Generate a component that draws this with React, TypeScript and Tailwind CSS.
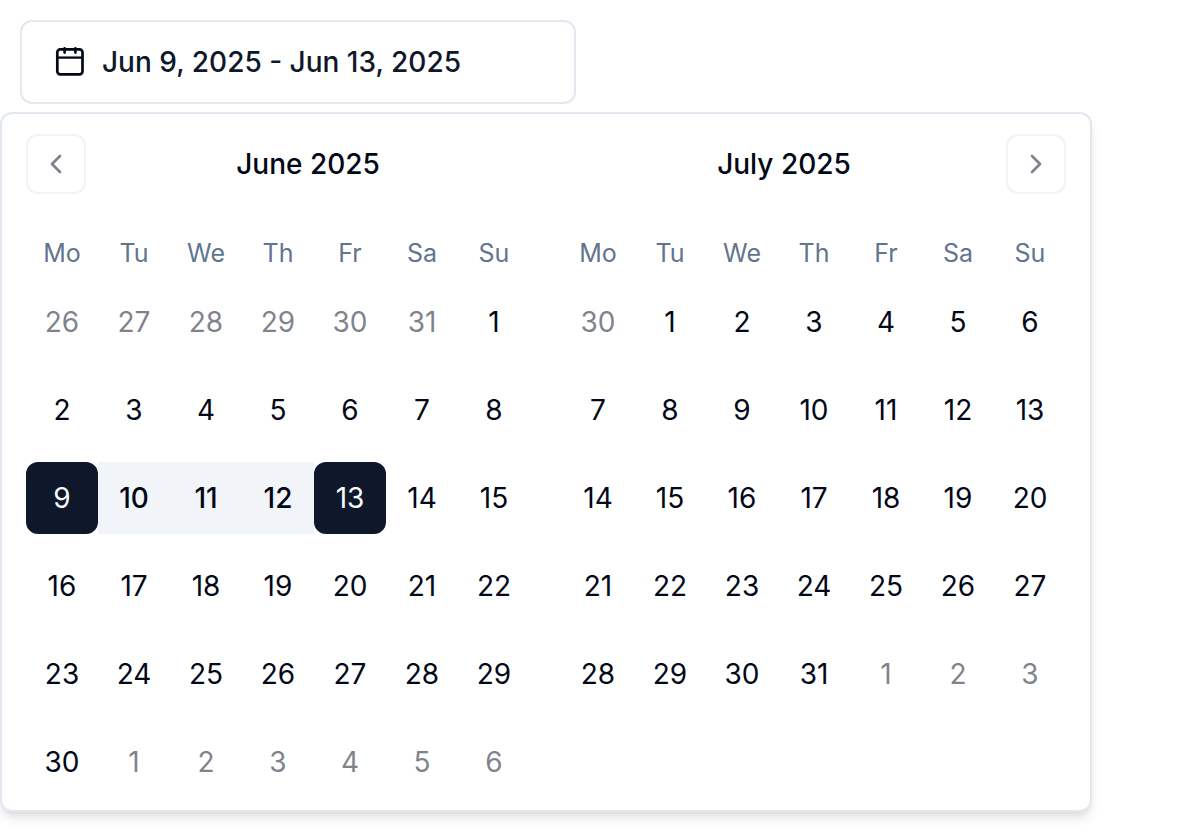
import React from "react";
import { ChevronLeft, ChevronRight } from "lucide-react";

type Day = { n: number; outside: boolean };
type Month = { name: string; lead: number[]; length: number; trail: number };

const WEEKDAYS = [
  ["Mo", "Monday"],
  ["Tu", "Tuesday"],
  ["We", "Wednesday"],
  ["Th", "Thursday"],
  ["Fr", "Friday"],
  ["Sa", "Saturday"],
  ["Su", "Sunday"],
];

const JUNE: Month = { name: "June 2025", lead: [26, 27, 28, 29, 30, 31], length: 30, trail: 6 };
const JULY: Month = { name: "July 2025", lead: [30], length: 31, trail: 3 };

function weeksOf(month: Month): Day[][] {
  const days: Day[] = [
    ...month.lead.map((n) => ({ n, outside: true })),
    ...Array.from({ length: month.length }, (_, i) => ({ n: i + 1, outside: false })),
    ...Array.from({ length: month.trail }, (_, i) => ({ n: i + 1, outside: true })),
  ];
  const weeks: Day[][] = [];
  for (let i = 0; i < days.length; i += 7) weeks.push(days.slice(i, i + 7));
  return weeks;
}

function CalendarIcon() {
  return (
    <svg
      className="size-8 shrink-0 text-[#020817]"
      viewBox="0 0 32 32"
      fill="none"
      stroke="currentColor"
      strokeWidth="2.7"
      aria-hidden="true"
    >
      <rect x="3.3" y="3.3" width="25.2" height="25" rx="3" />
      <path d="M3.3 11.6h25.2" strokeWidth="2.3" />
      <path d="M10.6 2.3v4.3M21.4 2.3v4.3" strokeLinecap="round" />
    </svg>
  );
}

function NavButton({ label, children }: { label: string; children: React.ReactNode }) {
  return (
    <button
      type="button"
      aria-label={label}
      className="flex size-15 shrink-0 items-center justify-center rounded-xl border-2 border-slate-200 text-[#020817] opacity-50"
    >
      {children}
    </button>
  );
}

function DayCell({ day, start, end }: { day: Day; start?: number; end?: number }) {
  const ranged = !day.outside && start !== undefined && end !== undefined;
  const edge = ranged && (day.n === start || day.n === end);
  const middle = ranged && day.n > start && day.n < end;
  const tone = edge
    ? "rounded-xl bg-slate-900 text-slate-50"
    : middle
      ? "bg-slate-100 font-medium"
      : day.outside
        ? "opacity-50"
        : "";
  return (
    <td className="p-0">
      <button type="button" className={`size-18 text-center ${tone}`}>
        {day.n}
      </button>
    </td>
  );
}

function MonthPanel({
  month,
  start,
  end,
  prev,
  next,
}: {
  month: Month;
  start?: number;
  end?: number;
  prev?: boolean;
  next?: boolean;
}) {
  return (
    <section aria-label={month.name}>
      <div className="flex items-center">
        {prev && (
          <NavButton label="Previous month">
            <ChevronLeft className="size-8" />
          </NavButton>
        )}
        <h2 className="flex-1 text-center font-medium">{month.name}</h2>
        {next && (
          <NavButton label="Next month">
            <ChevronRight className="size-8" />
          </NavButton>
        )}
      </div>
      <table className="mt-[42px]">
        <thead>
          <tr className="flex">
            {WEEKDAYS.map(([short, long]) => (
              <th
                key={short}
                scope="col"
                abbr={long}
                className="w-18 p-0 text-center text-[25px] leading-[34px] font-normal text-slate-500"
              >
                {short}
              </th>
            ))}
          </tr>
        </thead>
        <tbody>
          {weeksOf(month).map((week, i) => (
            <tr key={i} className="mt-4 flex">
              {week.map((day, j) => (
                <DayCell key={j} day={day} start={start} end={end} />
              ))}
            </tr>
          ))}
        </tbody>
      </table>
    </section>
  );
}

export default function App() {
  return (
    <main className="flex min-h-screen flex-col items-start gap-2 bg-white pt-5 font-['Inter','Liberation_Sans',sans-serif] text-[28px] leading-10 text-[#020817]">
      <button
        type="button"
        aria-expanded="true"
        aria-haspopup="dialog"
        className="ml-5 flex h-21 w-139 items-center gap-4 rounded-xl border-2 border-slate-200 px-8 text-left font-medium text-slate-900"
      >
        <CalendarIcon />
        Jun 9, 2025 - Jun 13, 2025
      </button>
      <div
        role="dialog"
        aria-label="Choose dates"
        className="flex gap-8 rounded-xl border-2 border-slate-200 bg-white px-6 pt-5 pb-3 shadow-[0_8px_12px_-2px_rgb(0_0_0/0.1),0_4px_8px_-4px_rgb(0_0_0/0.1)]"
      >
        <MonthPanel month={JUNE} start={9} end={13} prev />
        <MonthPanel month={JULY} next />
      </div>
    </main>
  );
}
